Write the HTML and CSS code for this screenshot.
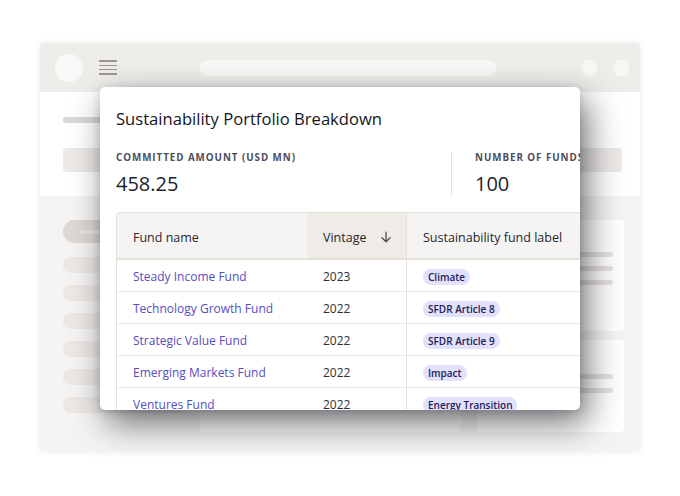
FILE: index.html
```html
<!DOCTYPE html>
<html lang="en">
<head>
<meta charset="utf-8">
<title>Sustainability Portfolio Breakdown</title>
<link rel="stylesheet" href="styles.css">
</head>
<body>
<div class="stage">
  <div class="window">
    <header class="win-head">
      <span class="avatar"></span>
      <span class="burger"><i></i><i></i><i></i><i></i></span>
      <span class="search"></span>
      <span class="spacer"></span>
      <span class="dot"></span>
      <span class="dot"></span>
    </header>
    <section class="win-top">
      <span class="sk-title"></span>
      <span class="sk-bar"></span>
    </section>
    <section class="win-body">
      <aside class="sk-side">
        <span class="sk-pill-big"><i></i></span>
        <span class="sk-pill"></span>
        <span class="sk-pill"></span>
        <span class="sk-pill"></span>
        <span class="sk-pill"></span>
        <span class="sk-pill"></span>
        <span class="sk-pill"></span>
      </aside>
      <div class="sk-main"></div>
      <div class="sk-cards">
        <div class="sk-card sk-card-a"><i></i><i></i><i></i></div>
        <div class="sk-card sk-card-b"><i></i><i></i></div>
      </div>
    </section>
  </div>

  <div class="modal">
    <h1 class="modal-title">Sustainability Portfolio Breakdown</h1>
    <div class="stats">
      <div class="stat stat-first">
        <div class="stat-label">COMMITTED AMOUNT (USD MN)</div>
        <div class="stat-value">458.25</div>
      </div>
      <div class="stat">
        <div class="stat-label">NUMBER OF FUNDS</div>
        <div class="stat-value">100</div>
      </div>
    </div>
    <table class="funds">
      <thead>
        <tr>
          <th class="c-name">Fund name</th>
          <th class="c-vint sorted">Vintage <svg class="sort-icon" width="12" height="12" viewBox="0 0 12 12" aria-hidden="true"><path d="M6 1.2v9.3M2 6.7l4 4 4-4" fill="none" stroke="#4a4a52" stroke-width="1.3" stroke-linecap="round" stroke-linejoin="round"/></svg></th>
          <th class="c-label">Sustainability fund label</th>
        </tr>
      </thead>
      <tbody>
        <tr><td><a href="#">Steady Income Fund</a></td><td>2023</td><td class="c-label"><span class="badge">Climate</span></td></tr>
        <tr><td><a href="#">Technology Growth Fund</a></td><td>2022</td><td class="c-label"><span class="badge">SFDR Article 8</span></td></tr>
        <tr><td><a href="#">Strategic Value Fund</a></td><td>2022</td><td class="c-label"><span class="badge">SFDR Article 9</span></td></tr>
        <tr><td><a href="#">Emerging Markets Fund</a></td><td>2022</td><td class="c-label"><span class="badge">Impact</span></td></tr>
        <tr><td><a href="#">Ventures Fund</a></td><td>2022</td><td class="c-label"><span class="badge">Energy Transition</span></td></tr>
      </tbody>
    </table>
  </div>
</div>
</body>
</html>
```

FILE: styles.css
```css
* { box-sizing: border-box; }

html, body {
  margin: 0;
  padding: 0;
  background: #ffffff;
  font-family: "Open Sans", "Noto Sans", "Liberation Sans", sans-serif;
}

.stage {
  position: relative;
  width: 680px;
  height: 496px;
  padding: 43px 40px 44px 40px;
}

/* ---------- background window (skeleton) ---------- */
.window {
  width: 600px;
  height: 409px;
  background: #f5f4f2;
  border-radius: 4px;
  overflow: hidden;
  box-shadow: 0 0 6px rgba(0, 0, 0, 0.08);
  display: flex;
  flex-direction: column;
  filter: blur(0.4px);
}

.win-head {
  height: 49px;
  flex: none;
  background: #efedea;
  display: flex;
  align-items: center;
  padding: 0 11px 0 15px;
}

.avatar {
  width: 28px;
  height: 28px;
  border-radius: 50%;
  background: #f9f8f7;
  margin-right: 16px;
}

.burger {
  width: 18px;
  display: flex;
  flex-direction: column;
  gap: 2.6px;
  margin-right: 83px;
}
.burger i {
  display: block;
  height: 1.6px;
  background: #9a9593;
}

.search {
  width: 296px;
  height: 16px;
  border-radius: 8px;
  background: #f8f7f5;
}

.spacer { flex: 1; }

.dot {
  width: 16px;
  height: 16px;
  border-radius: 50%;
  background: #f8f7f5;
  margin-left: 16px;
}

.win-top {
  height: 104px;
  flex: none;
  background: #ffffff;
  padding: 25px 18px 0 23px;
  display: flex;
  flex-direction: column;
  align-items: flex-start;
}

.sk-title {
  width: 90px;
  height: 6px;
  border-radius: 3px;
  background: #dcd7d3;
}

.sk-bar {
  margin-top: 25px;
  width: 559px;
  height: 24px;
  border-radius: 4px;
  background: #ece9e6;
}

.win-body {
  flex: 1;
  display: flex;
  padding: 24px 16px 20px 23px;
}

.sk-side {
  width: 125px;
  display: flex;
  flex-direction: column;
  gap: 12px;
}

.sk-pill-big {
  height: 23px;
  border-radius: 12px;
  background: #dcd8d4;
  margin-bottom: 2px;
  display: flex;
  align-items: center;
  padding-left: 17px;
}
.sk-pill-big i {
  display: block;
  width: 40px;
  height: 4px;
  border-radius: 2px;
  background: #e9e6e3;
}

.sk-pill {
  height: 16px;
  border-radius: 8px;
  background: #ebe8e5;
}

.sk-main {
  width: 261px;
  margin-left: 12px;
  border-radius: 4px;
  background: #fdfdfc;
}

.sk-cards {
  width: 147px;
  margin-left: 16px;
  display: flex;
  flex-direction: column;
  gap: 9px;
}

.sk-card {
  background: #ffffff;
  border-radius: 4px;
  display: flex;
  flex-direction: column;
  gap: 9px;
  padding: 0 11px 0 12px;
}
.sk-card i {
  display: block;
  height: 5px;
  border-radius: 3px;
  background: #e6e2de;
}
.sk-card-a { height: 111px; padding-top: 32px; }
.sk-card-b { height: 92px; padding-top: 34px; }

/* ---------- modal ---------- */
.modal {
  position: absolute;
  left: 100px;
  top: 87px;
  width: 480px;
  height: 323px;
  background: #ffffff;
  border-radius: 5px;
  overflow: hidden;
  padding: 20px 0 0 16px;
  box-shadow: 7px 13px 34px rgba(20, 20, 28, 0.6), 0 2px 10px rgba(20, 20, 28, 0.15);
}

.modal-title {
  margin: 0;
  font-size: 16.6px;
  line-height: 24px;
  font-weight: 500;
  color: #16161c;
  white-space: nowrap;
}

.stats {
  display: flex;
  margin-top: 21px;
  height: 44px;
}

.stat { white-space: nowrap; flex: none; }

.stat-first {
  width: 336px;
  border-right: 1px solid #e6e2de;
  margin-right: 23px;
}

.stat-label {
  font-size: 9.8px;
  line-height: 12px;
  font-weight: 700;
  letter-spacing: 0.95px;
  color: #4d4d5c;
}

.stat-value {
  margin-top: 7px;
  font-size: 20px;
  line-height: 26px;
  font-weight: 500;
  color: #1d1f30;
}

.funds {
  margin-top: 16px;
  border-collapse: separate;
  border-spacing: 0;
  width: 620px;
  table-layout: fixed;
  border-top: 1px solid #e6e0da;
  border-left: 1px solid #e6e0da;
  border-top-left-radius: 4px;
  font-size: 12px;
  color: #2e2e35;
}

.funds th {
  height: 47px;
  text-align: left;
  font-weight: 500;
  font-size: 12.5px;
  color: #26262e;
  background: #f5f4f2;
  border-bottom: 2px solid #e6e0da;
  padding: 3px 0 0 16px;
  white-space: nowrap;
}
.funds th.c-name { width: 190px; border-top-left-radius: 4px; }
.funds th.c-vint { width: 99px; }
.funds th.sorted { background: #efebe7; }

.funds .c-label {
  border-left: 1px solid #e6e0da;
  padding-left: 16px;
}

.sort-icon {
  margin-left: 10px;
  vertical-align: -1px;
}

.funds td {
  height: 32px;
  padding: 2px 0 0 16px;
  border-bottom: 1px solid #ece8e4;
  white-space: nowrap;
}

.funds a {
  color: #574dc2;
  text-decoration: none;
}

.badge {
  display: inline-block;
  height: 16px;
  line-height: 16px;
  padding: 0 5px;
  border-radius: 8px;
  background: #e1e1fb;
  color: #221b5c;
  font-size: 10px;
  font-weight: 600;
}
```
